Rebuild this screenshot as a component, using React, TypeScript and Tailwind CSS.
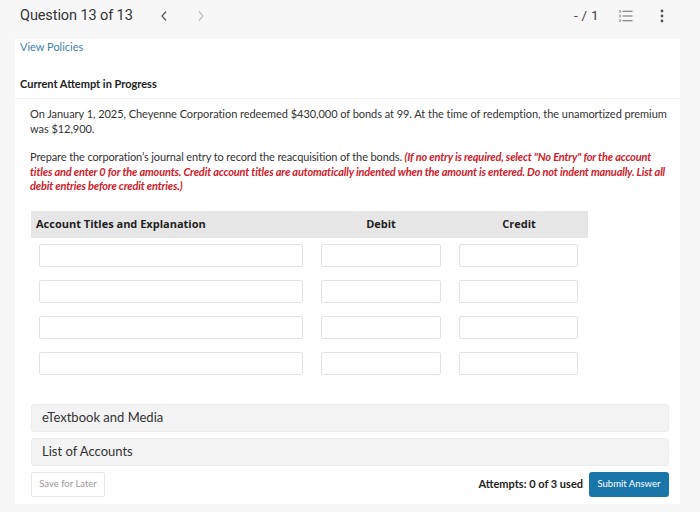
import React from 'react';

const rows = [0, 1, 2, 3];

const ListIcon = () => (
  <svg width="14" height="14" viewBox="0 0 14 14" fill="none">
    <rect x="0.5" y="1" width="1.2" height="2.6" fill="#8a8a8a" />
    <rect x="0.5" y="5.7" width="1.2" height="2.6" fill="#8a8a8a" />
    <rect x="0.5" y="10.4" width="1.2" height="2.6" fill="#8a8a8a" />
    <rect x="3.5" y="1.7" width="10" height="1.3" fill="#8a8a8a" />
    <rect x="3.5" y="6.35" width="10" height="1.3" fill="#8a8a8a" />
    <rect x="3.5" y="11" width="10" height="1.3" fill="#8a8a8a" />
  </svg>
);

const Kebab = () => (
  <svg width="4" height="14" viewBox="0 0 4 14">
    <circle cx="2" cy="2" r="1.4" fill="#555" />
    <circle cx="2" cy="7" r="1.4" fill="#555" />
    <circle cx="2" cy="12" r="1.4" fill="#555" />
  </svg>
);

const Chevron = ({ dir, color }: { dir: 'left' | 'right'; color: string }) => (
  <svg width="8" height="12" viewBox="0 0 8 12" fill="none">
    <path d={dir === 'left' ? 'M6 1.5 L2 6 L6 10.5' : 'M2 1.5 L6 6 L2 10.5'} stroke={color} strokeWidth="1.2" />
  </svg>
);

export default function App() {
  return (
    <div className="w-[700px] h-[512px] overflow-hidden bg-[#f7f7f7] font-['Lato',sans-serif] text-[#333]">
      {/* top bar */}
      <div className="h-[31px] flex items-center pl-[20px] pr-[36px]">
        <span className="font-['Roboto',sans-serif] text-[14.5px] text-[#333] tracking-[-0.1px]">Question 13 of 13</span>
        <span className="ml-[27px] flex items-center"><Chevron dir="left" color="#555" /></span>
        <span className="ml-[29px] flex items-center"><Chevron dir="right" color="#bdbdbd" /></span>
        <div className="flex-1" />
        <span className="font-['Roboto',sans-serif] text-[13.5px] text-[#444] tracking-[0.3px]">- / 1</span>
        <span className="ml-[20px] flex items-center"><ListIcon /></span>
        <span className="ml-[27px] flex items-center"><Kebab /></span>
      </div>

      {/* card */}
      <div className="ml-[15px] mt-[8px] w-[665px] bg-white pb-[7px]">
        <div className="pl-[5px] pt-[1px] text-[11px] leading-[14px] text-[#3f7fa6]">View Policies</div>
        <div className="pl-[5px] mt-[23px] text-[11px] leading-[14px] font-bold text-[#222]">Current Attempt in Progress</div>

        <div className="mt-[7px] border-t border-[#eeeeee] pl-[15px] pr-[11px] pt-[8px]">
          <p className="text-[11px] leading-[14.5px] text-[#333] tracking-[-0.05px]">
            On January 1, 2025, Cheyenne Corporation redeemed $430,000 of bonds at 99. At the time of redemption, the unamortized premium was $12,900.
          </p>
          <p className="mt-[14px] text-[11px] leading-[14.5px] text-[#333] tracking-[-0.12px]">
            Prepare the corporation’s journal entry to record the reacquisition of the bonds.{' '}
            <span className="italic font-bold text-[#d0202a] tracking-[-0.17px]">
              (If no entry is required, select "No Entry" for the account titles and enter 0 for the amounts. Credit account titles are automatically indented when the amount is entered. Do not indent manually. List all debit entries before credit entries.)
            </span>
          </p>

          {/* journal table */}
          <div className="mt-[17px] ml-[1px] w-[557px]">
            <div className="grid grid-cols-[281px_138px_138px] h-[27px] items-center bg-[#e6e6e6] font-['Open_Sans',sans-serif] text-[11px] font-bold text-[#222]">
              <span className="pl-[5px]">Account Titles and Explanation</span>
              <span className="text-center">Debit</span>
              <span className="text-center">Credit</span>
            </div>
            <div className="mt-[6px] flex flex-col gap-[13px]">
              {rows.map((r) => (
                <div key={r} className="grid grid-cols-[281px_138px_138px]">
                  <div className="pl-[8px]"><div className="w-[264px] h-[23px] border border-[#e2e2e2] rounded-[2px] bg-white" /></div>
                  <div className="pl-[9px]"><div className="w-[120px] h-[23px] border border-[#e2e2e2] rounded-[2px] bg-white" /></div>
                  <div className="pl-[9px]"><div className="w-[119px] h-[23px] border border-[#e2e2e2] rounded-[2px] bg-white" /></div>
                </div>
              ))}
            </div>
          </div>

          {/* resources */}
          <div className="mt-[29px] ml-[1px] flex flex-col gap-[6px]">
            <div className="h-[28px] flex items-center pl-[10px] bg-[#f3f3f3] border border-[#ececec] rounded-[3px] text-[13px] text-[#333]">eTextbook and Media</div>
            <div className="h-[28px] flex items-center pl-[10px] bg-[#f3f3f3] border border-[#ececec] rounded-[3px] text-[13px] text-[#333]">List of Accounts</div>
          </div>

          <div className="mt-[6px] ml-[1px] flex items-center">
            <button className="h-[25px] w-[74px] border border-[#e6e6e6] rounded-[2px] bg-white text-[9.5px] text-[#9a9a9a]">Save for Later</button>
            <div className="flex-1" />
            <span className="text-[11px] font-bold text-[#222] mr-[6px]">Attempts: 0 of 3 used</span>
            <button className="h-[25px] w-[80px] rounded-[3px] bg-[#1a76aa] text-[9.5px] text-white">Submit Answer</button>
          </div>
        </div>
      </div>
    </div>
  );
}
